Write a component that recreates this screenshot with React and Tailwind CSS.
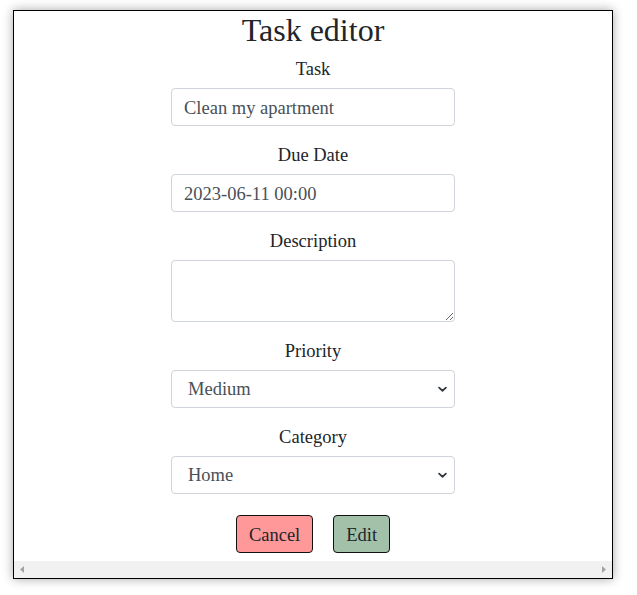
import React from "react";

const serif = { fontFamily: '"Liberation Serif", "Times New Roman", serif' };

function Chevron() {
  return (
    <svg className="pointer-events-none absolute right-[7px] top-1/2 -translate-y-1/2" width="11" height="11" viewBox="0 0 16 16" fill="none">
      <path d="M3 6l5 4.5L13 6" stroke="#343a40" strokeWidth="2.6" strokeLinecap="round" strokeLinejoin="round" />
    </svg>
  );
}

function Label({ children }) {
  return <label className="block h-6 pt-[1px] leading-6 text-[18.5px] text-[#212529] mb-2 text-center">{children}</label>;
}

export default function App() {
  return (
    <div className="bg-white w-[637px] h-[595px] pt-[10px] pl-[13px]" style={serif}>
      <div className="w-[600px] h-[569px] border border-black shadow-[0_0_10px_rgba(0,0,0,0.35)] flex flex-col bg-white">
        <div className="flex-1 flex flex-col items-center">
          <h1 className="h-[38px] leading-[38px] text-[32px] text-[#212529] mb-[7px]">Task editor</h1>
          <div className="w-[284px] mb-4">
            <Label>Task</Label>
            <input
              readOnly
              value="Clean my apartment"
              className="w-full h-[38px] px-3 pt-[2px] border border-[#ced4da] rounded-[4px] text-[18.5px] text-[#495057] outline-none"
            />
          </div>
          <div className="w-[284px] mb-4">
            <Label>Due Date</Label>
            <input
              readOnly
              value="2023-06-11 00:00"
              className="w-full h-[38px] px-3 pt-[2px] border border-[#ced4da] rounded-[4px] text-[18.5px] text-[#495057] outline-none"
            />
          </div>
          <div className="w-[284px] mb-4">
            <Label>Description</Label>
            <textarea
              readOnly
              className="block w-full h-[62px] px-3 py-1 border border-[#ced4da] rounded-[4px] text-[18.5px] text-[#495057] outline-none"
            />
          </div>
          <div className="w-[284px] mb-4">
            <Label>Priority</Label>
            <div className="relative">
              <select
                defaultValue="Medium"
                className="appearance-none w-full h-[38px] pl-4 pr-9 pt-[2px] border border-[#ced4da] rounded-[4px] text-[18.5px] text-[#495057] bg-white outline-none"
              >
                <option>Low</option>
                <option>Medium</option>
                <option>High</option>
              </select>
              <Chevron />
            </div>
          </div>
          <div className="w-[284px]">
            <Label>Category</Label>
            <div className="relative">
              <select
                defaultValue="Home"
                className="appearance-none w-full h-[38px] pl-4 pr-9 pt-[2px] border border-[#ced4da] rounded-[4px] text-[18.5px] text-[#495057] bg-white outline-none"
              >
                <option>Home</option>
                <option>Work</option>
              </select>
              <Chevron />
            </div>
          </div>
          <div className="flex gap-5 mt-[21px]">
            <button className="h-[38px] px-3 pt-[3px] border border-[#111] rounded-[4px] bg-[#ff9999] text-[18.5px] text-[#212529]">Cancel</button>
            <button className="h-[38px] px-3 pt-[3px] border border-[#111] rounded-[4px] bg-[#a3c0a9] text-[18.5px] text-[#212529]">Edit</button>
          </div>
        </div>
        <div className="h-[17px] bg-[#f1f1f1] flex items-center justify-between px-[6px]">
          <svg width="4" height="7" viewBox="0 0 4 7"><path d="M4 0L0 3.5L4 7Z" fill="#a3a3a3" /></svg>
          <svg width="4" height="7" viewBox="0 0 4 7"><path d="M0 0L4 3.5L0 7Z" fill="#a3a3a3" /></svg>
        </div>
      </div>
    </div>
  );
}
